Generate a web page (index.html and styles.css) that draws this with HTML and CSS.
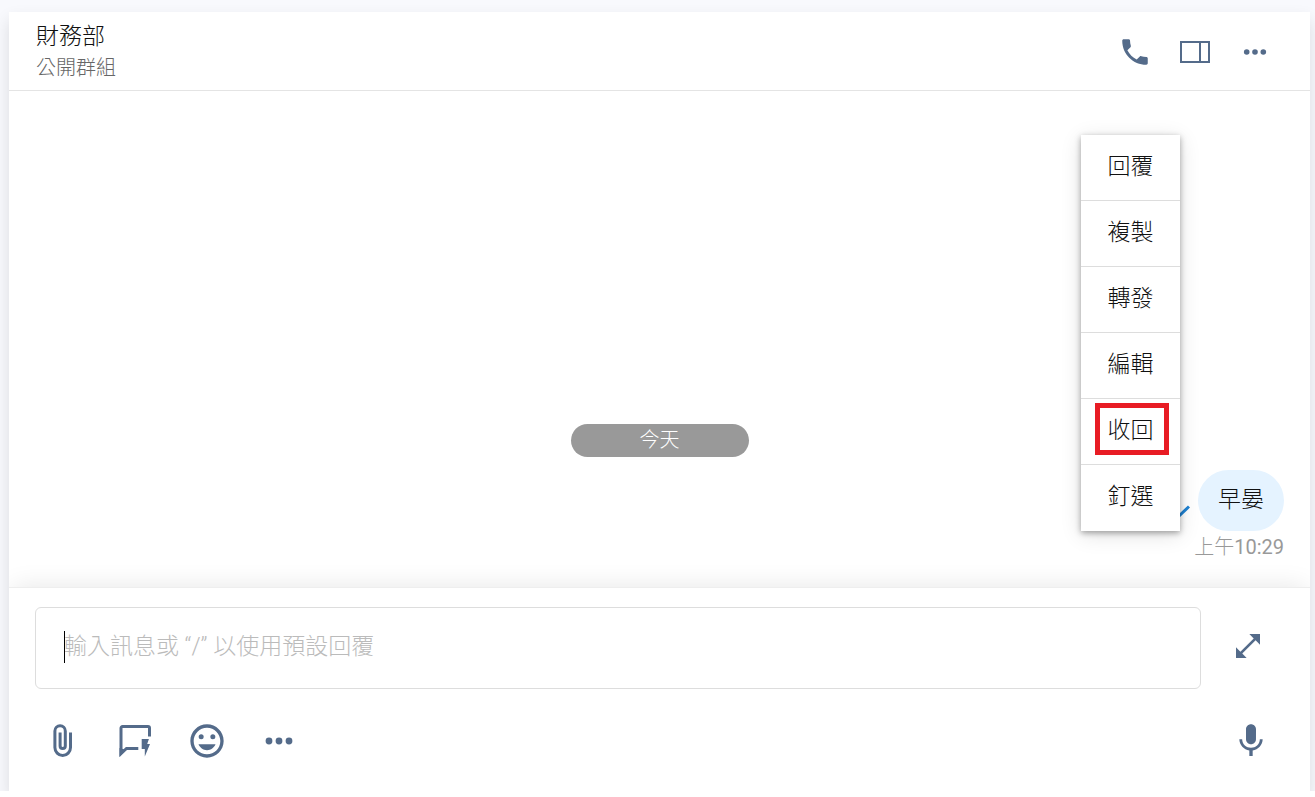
FILE: index.html
```html
<!DOCTYPE html>
<html lang="zh-Hant">
<head>
    <meta charset="UTF-8">
    <meta name="viewport" content="width=device-width, initial-scale=1.0">
    <title>財務部</title>
    <link rel="stylesheet" href="styles.css">
</head>
<body>
    <div class="shell">
        <main class="chat">
            <!-- Header -->
            <header class="chat-header">
                <div class="chat-info">
                    <h1 class="chat-title">財務部</h1>
                    <p class="chat-subtitle">公開群組</p>
                </div>
                <div class="header-actions">
                    <button type="button" class="icon-button small" aria-label="通話">
                        <svg width="34" height="34" viewBox="0 0 24 24"><path d="M6.62 10.79c1.44 2.83 3.76 5.14 6.59 6.59l2.2-2.2c.27-.27.67-.36 1.02-.24 1.12.37 2.33.57 3.57.57.55 0 1 .45 1 1V20c0 .55-.45 1-1 1-9.39 0-17-7.61-17-17 0-.55.45-1 1-1h3.5c.55 0 1 .45 1 1 0 1.25.2 2.45.57 3.57.11.35.03.74-.25 1.02l-2.2 2.2z"/></svg>
                    </button>
                    <button type="button" class="icon-button small" aria-label="側邊欄">
                        <svg class="line" width="32" height="24" viewBox="0 0 32 24"><path stroke-width="2" d="M2 2h28v20H2zM21 2v20"/></svg>
                    </button>
                    <button type="button" class="icon-button small" aria-label="更多">
                        <svg width="24" height="8" viewBox="0 0 24 8"><circle cx="3.7" cy="4" r="2.8"/><circle cx="12" cy="4" r="2.8"/><circle cx="20.3" cy="4" r="2.8"/></svg>
                    </button>
                </div>
            </header>

            <!-- Messages -->
            <section class="messages">
                <div class="date-divider">今天</div>
                <div class="message">
                    <div class="message-row">
                        <svg class="sent-mark" width="16" height="14" viewBox="0 0 16 14"><path d="M1 7l4 4L15 1.500"/></svg>
                        <div class="bubble">早晏</div>
                        <div class="menu" role="menu">
                            <button type="button" class="menu-item" role="menuitem">回覆</button>
                            <button type="button" class="menu-item" role="menuitem">複製</button>
                            <button type="button" class="menu-item" role="menuitem">轉發</button>
                            <button type="button" class="menu-item" role="menuitem">編輯</button>
                            <button type="button" class="menu-item marked" role="menuitem">收回</button>
                            <button type="button" class="menu-item" role="menuitem">釘選</button>
                        </div>
                    </div>
                    <time class="message-time" datetime="10:29">上午<span class="digits">10:29</span></time>
                </div>
            </section>

            <!-- Composer -->
            <form class="composer">
                <div class="composer-row">
                    <div class="input-wrap">
                        <textarea class="message-input" rows="1" aria-label="訊息" placeholder="輸入訊息或 “/” 以使用預設回覆"></textarea>
                        <span class="caret"></span>
                    </div>
                    <button type="button" class="icon-button wide" aria-label="展開">
                        <svg width="32" height="32" viewBox="0 0 24 24"><path d="M21 11V3h-8l3.290 3.290-10 10L3 13v8h8l-3.290-3.290 10-10z"/></svg>
                    </button>
                </div>
                <div class="toolbar">
                    <button type="button" class="icon-button" aria-label="附件">
                        <svg class="line" width="20" height="34" viewBox="0 0 20 34"><path stroke-width="3" d="M17.500 8.500v15a7.800 8 0 0 1-15.600 0V7a5.200 5.200 0 0 1 10.400 0v15a2.600 2.600 0 0 1-5.200 0V8.500"/></svg>
                    </button>
                    <button type="button" class="icon-button" aria-label="預設回覆">
                        <svg width="34" height="32" viewBox="0 0 34 32"><path class="line" stroke-width="3" d="M20.300 23.500H8.500L3 28.500V3a1.500 1.500 0 0 1 1.500-1.500H30A1.500 1.500 0 0 1 31.500 3v8.500"/><path d="M1.500 23v9L8 25zM23.700 14h7.200l-1.700 5h2.800l-5.200 12.500V24h-3.100z"/></svg>
                    </button>
                    <button type="button" class="icon-button" aria-label="表情符號">
                        <svg width="40" height="40" viewBox="0 0 24 24"><path d="M11.990 2C6.470 2 2 6.480 2 12s4.470 10 9.990 10C17.520 22 22 17.520 22 12S17.520 2 11.990 2zM12 20c-4.420 0-8-3.580-8-8s3.580-8 8-8 8 3.580 8 8-3.580 8-8 8z"/><circle cx="8.500" cy="9.500" r="1.500"/><circle cx="15.500" cy="9.500" r="1.500"/><path d="M12 17.500c2.330 0 4.310-1.460 5.110-3.500H6.890c.8 2.040 2.780 3.500 5.110 3.500z"/></svg>
                    </button>
                    <button type="button" class="icon-button" aria-label="更多功能">
                        <svg width="28" height="8" viewBox="0 0 28 8"><circle cx="4" cy="4" r="3.400"/><circle cx="14" cy="4" r="3.400"/><circle cx="24" cy="4" r="3.400"/></svg>
                    </button>
                    <button type="button" class="icon-button voice" aria-label="語音">
                        <svg width="40" height="40" viewBox="0 0 24 24"><path d="M12 14c1.660 0 2.990-1.340 2.990-3L15 5c0-1.660-1.340-3-3-3S9 3.340 9 5v6c0 1.660 1.340 3 3 3zm5.300-3c0 3-2.540 5.100-5.300 5.100S6.700 14 6.700 11H5c0 3.410 2.720 6.230 6 6.720V21h2v-3.280c3.280-.48 6-3.300 6-6.720h-1.700z"/></svg>
                    </button>
                </div>
            </form>
        </main>
    </div>
</body>
</html>
```
FILE: styles.css
```css
* {
    box-sizing: border-box;
}

body {
    margin: 0;
    padding-bottom: 6px;
    height: 100vh;
    background: #fff;
    font-family: Roboto, "Noto Sans CJK TC", sans-serif;
    font-weight: 300;
    color: #111;
}

button,
textarea {
    font: inherit;
    color: inherit;
}

.shell {
    height: 100%;
    padding: 12px 5px 0 9px;
    background: #f8f9fd;
    overflow: hidden;
}

.chat {
    display: flex;
    flex-direction: column;
    height: 100%;
    background: #fff;
    box-shadow: 0 8px 16px rgba(0, 0, 0, 0.12);
}

/* Header */
.chat-header {
    display: flex;
    align-items: center;
    justify-content: space-between;
    padding: 9px 35px 7px 27px;
    border-bottom: 1px solid #e4e4e4;
}

.chat-title {
    margin: 0;
    font-size: 23px;
    font-weight: 300;
    line-height: 32px;
}

.chat-subtitle {
    margin: 0;
    font-size: 20px;
    line-height: 30px;
    color: #666;
}

.header-actions {
    display: flex;
    gap: 20px;
}

.icon-button {
    display: flex;
    align-items: center;
    justify-content: center;
    width: 52px;
    height: 52px;
    padding: 0;
    border: 0;
    background: none;
    cursor: pointer;
}

.icon-button.small {
    width: 40px;
    height: 40px;
}

.icon-button.wide {
    width: 72px;
    padding-bottom: 4px;
}

.icon-button svg {
    fill: #546b8a;
}

.icon-button .line {
    fill: none;
    stroke: #546b8a;
}

/* Messages */
.messages {
    flex: 1;
    display: flex;
    flex-direction: column;
    justify-content: flex-end;
    gap: 13px;
    padding: 0 26px 24px;
}

.date-divider {
    align-self: center;
    width: 178px;
    border-radius: 17px;
    background: #999;
    color: #fff;
    font-size: 20px;
    line-height: 33px;
    text-align: center;
}

.message {
    display: flex;
    flex-direction: column;
    align-items: flex-end;
}

.message-row {
    position: relative;
    display: flex;
    align-items: flex-end;
    gap: 8px;
}

.sent-mark {
    margin-bottom: 12px;
    fill: none;
    stroke: #1f82d2;
    stroke-width: 3;
}

.bubble {
    padding: 0 20px 2px;
    border-radius: 31px;
    background: #e5f3ff;
    font-size: 23px;
    line-height: 59px;
}

.message-time {
    font-size: 20px;
    line-height: 32px;
    color: #999;
}

.digits {
    font-weight: 400;
}

/* Context menu */
.menu {
    position: absolute;
    right: 104px;
    bottom: 0;
    z-index: 2;
    width: 99px;
    background: #fff;
    box-shadow: 0 2px 6px rgba(0, 0, 0, 0.35), 0 4px 20px rgba(0, 0, 0, 0.12);
}

.menu-item {
    display: block;
    position: relative;
    width: 100%;
    height: 66px;
    padding: 0 0 7px;
    border: 0;
    border-bottom: 1px solid #ddd;
    background: none;
    font-size: 23px;
    cursor: pointer;
}

.menu-item:last-child {
    border-bottom-color: transparent;
}

.menu-item.marked::after {
    content: "";
    position: absolute;
    inset: 4px 11px 9px 14px;
    border: 5px solid #e81c24;
}

/* Composer */
.composer {
    position: relative;
    padding: 19px 26px 24px;
    border-top: 1px solid #eee;
    background: #fff;
    box-shadow: 0 -4px 24px -4px rgba(0, 0, 0, 0.1);
    clip-path: inset(-40px 0 0 0);
}

.composer-row {
    display: flex;
    align-items: center;
    gap: 11px;
}

.input-wrap {
    position: relative;
    flex: 1;
    display: flex;
}

.message-input {
    flex: 1;
    height: 82px;
    padding: 22px 28px;
    border: 1px solid #ddd;
    border-radius: 6px;
    outline: none;
    resize: none;
    overflow: hidden;
    font-size: 23px;
    line-height: 34px;
}

.message-input::placeholder {
    color: #bbb;
    opacity: 1;
}

.caret {
    position: absolute;
    left: 29px;
    top: 24px;
    width: 1px;
    height: 32px;
    background: #000;
}

.toolbar {
    display: flex;
    align-items: center;
    gap: 20px;
    margin-top: 26px;
    padding-left: 2px;
}

.icon-button.voice {
    width: 66px;
    margin-left: auto;
}
```
